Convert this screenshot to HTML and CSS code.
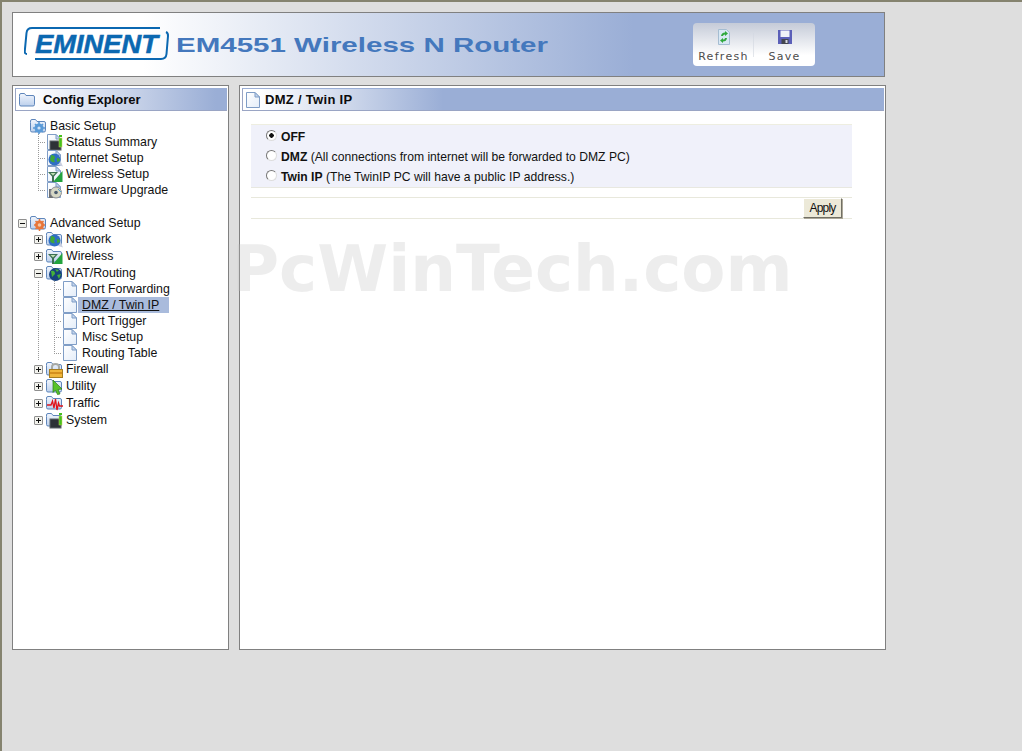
FILE: index.html
```html
<!DOCTYPE html>
<html lang="en">
<head>
    <meta charset="UTF-8">
    <meta name="viewport" content="width=device-width, initial-scale=1.0">
    <title>EM4551 Wireless N Router</title>
    <link rel="stylesheet" href="styles.css">
</head>
<body>
    <svg class="sprite" width="0" height="0">
        <defs>
            <linearGradient id="folderFill" x1="0" y1="0" x2="0" y2="1">
                <stop offset="0" stop-color="#f2f6fd"/>
                <stop offset="1" stop-color="#bcd0ec"/>
            </linearGradient>
            <linearGradient id="pageFill" x1="0" y1="0" x2="1" y2="1">
                <stop offset="0" stop-color="#fff"/>
                <stop offset="1" stop-color="#e4edf9"/>
            </linearGradient>
            <symbol id="folder" viewBox="0 0 16 16">
                <path d="M.5 4.500 V3 Q.5 1.500 2 1.500 H5.500 L7 3.500 H14 Q15.500 3.500 15.500 5 V12.500 Q15.500 14 14 14 H2 Q.5 14 .5 12.500 Z" fill="url(#folderFill)" stroke="#5f86bb"/>
            </symbol>
            <symbol id="page" viewBox="0 0 16 16">
                <path d="M1.500 .5 H10 L14.500 5 V15.500 H1.500 Z" fill="url(#pageFill)" stroke="#7f9dc6"/>
                <path d="M10 .5 V5 H14.500 Z" fill="#c6d6ee" stroke="#7f9dc6"/>
            </symbol>
            <symbol id="status" viewBox="0 0 16 16">
                <rect x="3" y="6" width="11" height="9" fill="#2d3236" stroke="#5d6468"/>
                <rect x="12" y="0" width="3" height="2" fill="#46c01e"/>
                <rect x="12" y="3" width="3" height="9" fill="#46c01e" stroke="#ccd85a" stroke-width=".5"/>
            </symbol>
            <symbol id="globe" viewBox="0 0 16 16">
                <path d="M8 13 L16 15.500 L13 9 Z" fill="#c9cfe0"/>
                <circle cx="7.500" cy="8.500" r="6" fill="#2f6fc4"/>
                <path d="M4 4 Q8 4 8 7 Q6 9 8 11 Q5 12 3 9 Z" fill="#3fa83a"/>
                <path d="M10 7 Q13 7 13 10 L10 11 Z" fill="#3fa83a"/>
            </symbol>
            <symbol id="wifi" viewBox="0 0 16 16">
                <path d="M15.500 4 V15 H6 Z" fill="#23a33f"/>
                <path d="M1 5 H11 L7 9.500 V15 H5 V9.500 Z" fill="#3d6f52"/>
                <path d="M3.500 6 H8.500 L6 8.500 Z" fill="#bfe0b4"/>
            </symbol>
            <symbol id="disc" viewBox="0 0 16 16">
                <rect x="2" y="6" width="10" height="9" fill="#6d6f70"/>
                <circle cx="9" cy="9.500" r="5.500" fill="#d6d7c4" stroke="#8c9099"/>
                <circle cx="9" cy="9.500" r="1.800" fill="#4a5b70"/>
                <path d="M11 6 L14 9" stroke="#50a0d0"/>
            </symbol>
            <symbol id="gear" viewBox="0 0 16 16">
                <circle cx="8" cy="9" r="4.500" fill="#5b9bd8"/>
                <path d="M8 3 V15 M2 9 H14 M4 5 L12 13 M12 5 L4 13" stroke="#5b9bd8" stroke-width="1.600"/>
                <circle cx="8" cy="9" r="1.600" fill="#cfe2f5"/>
            </symbol>
            <symbol id="tools" viewBox="0 0 16 16">
                <circle cx="8.500" cy="9" r="4.500" fill="#e8763a"/>
                <path d="M8.500 3 V15 M3 9 H14 M4.500 5 L12.500 13 M12.500 5 L4.500 13" stroke="#e8763a" stroke-width="1.500"/>
                <circle cx="8.500" cy="9" r="1.800" fill="#f6c6a0"/>
            </symbol>
            <symbol id="nat" viewBox="0 0 16 16">
                <circle cx="8.500" cy="8.500" r="6.500" fill="#17427e"/>
                <path d="M4 5 Q8 4 8 8 L5 11 Z M10 9 L14 8 L12 13 Z M8 3 L12 4 L10 6 Z" fill="#45b03a"/>
            </symbol>
            <symbol id="lock" viewBox="0 0 16 16">
                <path d="M5 8 V5 Q5 2 8.500 2 Q12 2 12 5 V8" fill="none" stroke="#a7a9a5" stroke-width="2"/>
                <rect x="2.500" y="7.500" width="13" height="8" fill="#f0b63c" stroke="#a67d20"/>
                <rect x="3" y="10" width="12" height="2" fill="#d48f1e"/>
            </symbol>
            <symbol id="cursor" viewBox="0 0 16 16">
                <path d="M6 1 L15 10 L11 10.500 L13 15 L10.500 15.500 L8.500 11 L6 13.500 Z" fill="#58c32a" stroke="#2d7d17" stroke-width=".7"/>
            </symbol>
            <symbol id="pulse" viewBox="0 0 16 16">
                <path d="M0 9 H4 L5.500 5 L7 12 L8.500 3 L10 14 L11.500 7 L12.500 10 H16" fill="none" stroke="#e0141c" stroke-width="1.300"/>
            </symbol>
        </defs>
    </svg>

    <header class="banner">
        <svg class="logo" width="530" height="36" viewBox="0 0 530 36">
            <path d="M12 1 H8 Q3 1 2.500 6 L.8 24 Q.5 27 3 27" fill="none" stroke="#0b68b1" stroke-width="2"/>
            <path d="M11 1 H136" stroke="#0b68b1" stroke-width="2"/>
            <path d="M11 32 H137 Q142 32 142.500 27 L144 9 Q144.200 6 142 5" fill="none" stroke="#0b68b1" stroke-width="2"/>
            <text class="logo-name" x="11" y="26" textLength="123" lengthAdjust="spacingAndGlyphs">EMINENT</text>
            <text class="logo-model" x="152" y="25" textLength="372" lengthAdjust="spacingAndGlyphs">EM4551 Wireless N Router</text>
        </svg>
        <div class="toolbar">
            <a class="tool">
                <svg width="16" height="18" viewBox="0 0 16 18">
                    <path d="M2.500 1.500 H10.500 L13.500 4.500 V16.500 H2.500 Z" fill="#d8e8f4" stroke="#a5bdd2"/>
                    <path d="M5 8 Q5.500 4.500 9 4.500 V3 L12 5.500 L9 8 V6.500 Q7 6.500 7 8 Z" fill="#2fa83c"/>
                    <path d="M11 10 Q10.500 13.500 7 13.500 V15 L4 12.500 L7 10 V11.500 Q9 11.500 9 10 Z" fill="#2fa83c"/>
                </svg>
                <span>Refresh</span>
            </a>
            <a class="tool">
                <svg width="16" height="18" viewBox="0 0 16 18">
                    <rect x="1" y="2" width="14" height="14" fill="#5b5fb8"/>
                    <rect x="3.500" y="2.500" width="9" height="6.500" fill="#eef0f8"/>
                    <rect x="4.500" y="11" width="7" height="5" fill="#44474f"/>
                    <rect x="8.500" y="12" width="2" height="3" fill="#d7d9e4"/>
                </svg>
                <span>Save</span>
            </a>
        </div>
    </header>

    <main class="columns">
        <aside class="panel side">
            <h2 class="panel-title">
                <svg class="title-icon" width="18" height="16"><use href="#folder"/></svg>
                Config Explorer
            </h2>
            <ul class="tree">
                <li class="node root">
                    <span class="icon"><svg width="16" height="16"><use href="#folder"/></svg><svg class="badge" width="16" height="16"><use href="#gear"/></svg></span>
                    <span>Basic Setup</span>
                </li>
                <li>
                    <ul class="leaves level1">
                        <li class="leaf"><span class="icon"><svg width="16" height="16"><use href="#page"/></svg><svg class="badge" width="16" height="16"><use href="#status"/></svg></span><span>Status Summary</span></li>
                        <li class="leaf"><span class="icon"><svg width="16" height="16"><use href="#page"/></svg><svg class="badge" width="16" height="16"><use href="#globe"/></svg></span><span>Internet Setup</span></li>
                        <li class="leaf"><span class="icon"><svg width="16" height="16"><use href="#page"/></svg><svg class="badge" width="16" height="16"><use href="#wifi"/></svg></span><span>Wireless Setup</span></li>
                        <li class="leaf"><span class="icon"><svg width="16" height="16"><use href="#page"/></svg><svg class="badge" width="16" height="16"><use href="#disc"/></svg></span><span>Firmware Upgrade</span></li>
                    </ul>
                </li>
                <li class="node root second">
                    <span class="toggle minus"></span>
                    <span class="icon"><svg width="16" height="16"><use href="#folder"/></svg><svg class="badge" width="16" height="16"><use href="#tools"/></svg></span>
                    <span>Advanced Setup</span>
                </li>
                <li class="node sub">
                    <span class="toggle plus"></span>
                    <span class="icon"><svg width="16" height="16"><use href="#folder"/></svg><svg class="badge" width="16" height="16"><use href="#globe"/></svg></span>
                    <span>Network</span>
                </li>
                <li class="node sub">
                    <span class="toggle plus"></span>
                    <span class="icon"><svg width="16" height="16"><use href="#folder"/></svg><svg class="badge" width="16" height="16"><use href="#wifi"/></svg></span>
                    <span>Wireless</span>
                </li>
                <li class="node sub short">
                    <span class="toggle minus"></span>
                    <span class="icon"><svg width="16" height="16"><use href="#folder"/></svg><svg class="badge" width="16" height="16"><use href="#nat"/></svg></span>
                    <span>NAT/Routing</span>
                </li>
                <li class="through">
                    <ul class="leaves level2">
                        <li class="leaf"><span class="icon"><svg width="16" height="16"><use href="#page"/></svg></span><span class="label">Port Forwarding</span></li>
                        <li class="leaf"><span class="icon"><svg width="16" height="16"><use href="#page"/></svg></span><span class="label current">DMZ / Twin IP</span></li>
                        <li class="leaf"><span class="icon"><svg width="16" height="16"><use href="#page"/></svg></span><span class="label">Port Trigger</span></li>
                        <li class="leaf"><span class="icon"><svg width="16" height="16"><use href="#page"/></svg></span><span class="label">Misc Setup</span></li>
                        <li class="leaf"><span class="icon"><svg width="16" height="16"><use href="#page"/></svg></span><span class="label">Routing Table</span></li>
                    </ul>
                </li>
                <li class="node sub">
                    <span class="toggle plus"></span>
                    <span class="icon"><svg width="16" height="16"><use href="#folder"/></svg><svg class="badge" width="16" height="16"><use href="#lock"/></svg></span>
                    <span>Firewall</span>
                </li>
                <li class="node sub">
                    <span class="toggle plus"></span>
                    <span class="icon"><svg width="16" height="16"><use href="#folder"/></svg><svg class="badge" width="16" height="16"><use href="#cursor"/></svg></span>
                    <span>Utility</span>
                </li>
                <li class="node sub">
                    <span class="toggle plus"></span>
                    <span class="icon"><svg width="16" height="16"><use href="#folder"/></svg><svg class="badge" width="16" height="16"><use href="#pulse"/></svg></span>
                    <span>Traffic</span>
                </li>
                <li class="node sub">
                    <span class="toggle plus"></span>
                    <span class="icon"><svg width="16" height="16"><use href="#folder"/></svg><svg class="badge" width="16" height="16"><use href="#status"/></svg></span>
                    <span>System</span>
                </li>
            </ul>
        </aside>

        <section class="panel content">
            <h2 class="panel-title">
                <svg class="title-icon" width="16" height="16"><use href="#page"/></svg>
                DMZ / Twin IP
            </h2>
            <form class="form">
                <div class="options">
                    <label class="option"><input type="radio" name="mode" checked><span><b>OFF</b></span></label>
                    <label class="option"><input type="radio" name="mode"><span><b>DMZ</b> (All connections from internet will be forwarded to DMZ PC)</span></label>
                    <label class="option"><input type="radio" name="mode"><span><b>Twin IP</b> (The TwinIP PC will have a public IP address.)</span></label>
                </div>
                <div class="actions">
                    <button class="apply" type="button">Apply</button>
                </div>
            </form>
        </section>
    </main>

    <div class="watermark">PcWinTech.com</div>
</body>
</html>
```

FILE: styles.css
```css
* {
    margin: 0;
    padding: 0;
    box-sizing: border-box;
}

html, body {
    height: 100%;
    overflow: hidden;
}

body {
    font-family: "Liberation Sans", Arial, sans-serif;
    font-size: 12px;
    color: #111;
    background-color: #dedede;
    border-top: 2px solid #85836f;
    border-left: 2px solid #85836f;
    padding: 10px 0 0 10px;
}

ul {
    list-style: none;
}

.sprite {
    display: block;
    height: 0;
}

.banner {
    width: 873px;
    height: 65px;
    border: 1px solid #808080;
    background: linear-gradient(to right, #fff 130px, #9aaed6 620px);
    display: flex;
    justify-content: space-between;
    align-items: flex-start;
    padding: 10px 69px 0 11px;
}

.logo {
    margin-top: 4px;
}

.logo-name {
    font-size: 26px;
    font-weight: bold;
    font-style: italic;
    fill: #0b68b1;
    stroke: #0b68b1;
    stroke-width: .5px;
}

.logo-model {
    font-size: 21px;
    font-weight: bold;
    fill: #4478bd;
}

.toolbar {
    width: 122px;
    height: 43px;
    border-radius: 4px;
    background: linear-gradient(to bottom, #c5cbd8, #fff 75%);
    display: flex;
    padding-top: 5px;
}

.tool {
    width: 61px;
    display: flex;
    flex-direction: column;
    align-items: center;
    gap: 4px;
    font-family: "DejaVu Sans", sans-serif;
    font-size: 11px;
    letter-spacing: 1.300px;
    color: #4c4c4c;
}

.tool:first-child {
    background: linear-gradient(#d4d9e2, #e4e7ec) no-repeat right 5px / 1px 24px;
}

.columns {
    display: flex;
    gap: 10px;
    margin-top: 8px;
}

.panel {
    height: 565px;
    background: white;
    border: 1px solid #808080;
    padding: 2px 1px 0 2px;
}

.side {
    width: 217px;
}

.content {
    width: 647px;
}

.panel-title {
    height: 23px;
    font-size: 13px;
    line-height: 22px;
    font-weight: bold;
    color: #0b0b0b;
    display: flex;
    align-items: center;
    gap: 7px;
    padding-left: 2px;
    border: 1px solid #9aa5c4;
    border-top-color: #9aaed6;
    border-right: 0;
    background: linear-gradient(to right, #fff 15px, #9aaed6 200px);
}

.content .panel-title {
    gap: 4px;
    letter-spacing: .3px;
}

.tree {
    padding: 7px 0 0 3px;
    font-size: 12.350px;
}

.node, .leaf {
    display: flex;
    align-items: center;
    white-space: nowrap;
}

.node {
    height: 17px;
}

.root {
    height: 16px;
    padding-left: 12px;
}

.second {
    margin-top: 17px;
    padding-left: 0;
}

.sub {
    padding-left: 16px;
    padding-bottom: 1px;
}

.short {
    height: 16px;
    padding-bottom: 0;
}

.icon {
    width: 16px;
    height: 16px;
    flex: none;
    position: relative;
    margin-right: 4px;
}

.icon svg {
    display: block;
}

.badge {
    position: absolute;
    top: 1px;
    left: 1px;
}

.toggle {
    width: 9px;
    height: 9px;
    flex: none;
    border: 1px solid #8f8f8f;
    border-radius: 1px;
    margin-right: 3px;
    background:
        linear-gradient(#111, #111) center / 5px 1px no-repeat,
        #f2f2ec;
}

.toggle.plus {
    background:
        linear-gradient(#111, #111) center / 5px 1px no-repeat,
        linear-gradient(#111, #111) center / 1px 5px no-repeat,
        #f2f2ec;
}

.leaf {
    height: 16px;
    --rule: repeating-linear-gradient(to bottom, #999 0 1px, transparent 1px 2px);
    --dash: repeating-linear-gradient(to right, #999 0 1px, transparent 1px 2px);
    background:
        var(--rule) left top / 1px 100% no-repeat,
        var(--dash) left 50% / 8px 1px no-repeat;
    padding-left: 8px;
}

.leaf:last-child {
    background:
        var(--rule) left top / 1px 50% no-repeat,
        var(--dash) left 50% / 8px 1px no-repeat;
}

.level1 {
    margin-left: 20px;
}

.level2 {
    margin-left: 36px;
}

.through {
    background: repeating-linear-gradient(to bottom, #999 0 1px, transparent 1px 2px) 20px 0 / 1px 100% no-repeat;
}

.level2 .icon {
    margin-right: 0;
}

.label {
    padding-left: 4px;
}

.current {
    width: 91px;
    height: 16px;
    line-height: 16px;
    background-color: #a9bbdc;
    text-decoration: underline;
}

.form {
    padding: 13px 0 0 9px;
    font-size: 12.150px;
}

.options {
    width: 601px;
    height: 64px;
    background-color: #f0f1fa;
    border-top: 1px solid #eeeee0;
    border-bottom: 1px solid #e8e8e0;
    padding: 2px 0 0 15px;
}

.option {
    height: 20px;
    display: flex;
    align-items: center;
    gap: 4px;
}

.option input {
    appearance: none;
    width: 11px;
    height: 11px;
    margin-top: -3px;
    border-radius: 50%;
    border: 1px solid;
    border-color: #777 #ddd #ddd #777;
    background-color: #fff;
}

.option input:checked {
    background: radial-gradient(circle, #111 0 2px, #fff 2.500px);
}

.actions {
    width: 601px;
    height: 22px;
    margin-top: 9px;
    border-top: 1px solid #e8e8dc;
    border-bottom: 1px solid #e8e8dc;
    display: flex;
    justify-content: flex-end;
    padding-right: 10px;
}

.apply {
    width: 39px;
    height: 20px;
    font-family: inherit;
    font-size: 12px;
    letter-spacing: -.8px;
    color: #111;
    background-color: #ece9d8;
    border: 1px solid;
    border-color: #fff #716f64 #716f64 #fff;
    box-shadow: 1px 1px 0 #aca899;
}

.watermark {
    position: absolute;
    top: 231px;
    left: 232px;
    font-family: "DejaVu Sans", sans-serif;
    font-size: 64.300px;
    font-weight: bold;
    line-height: 76px;
    color: rgba(190, 190, 190, .27);
    pointer-events: none;
}
```
